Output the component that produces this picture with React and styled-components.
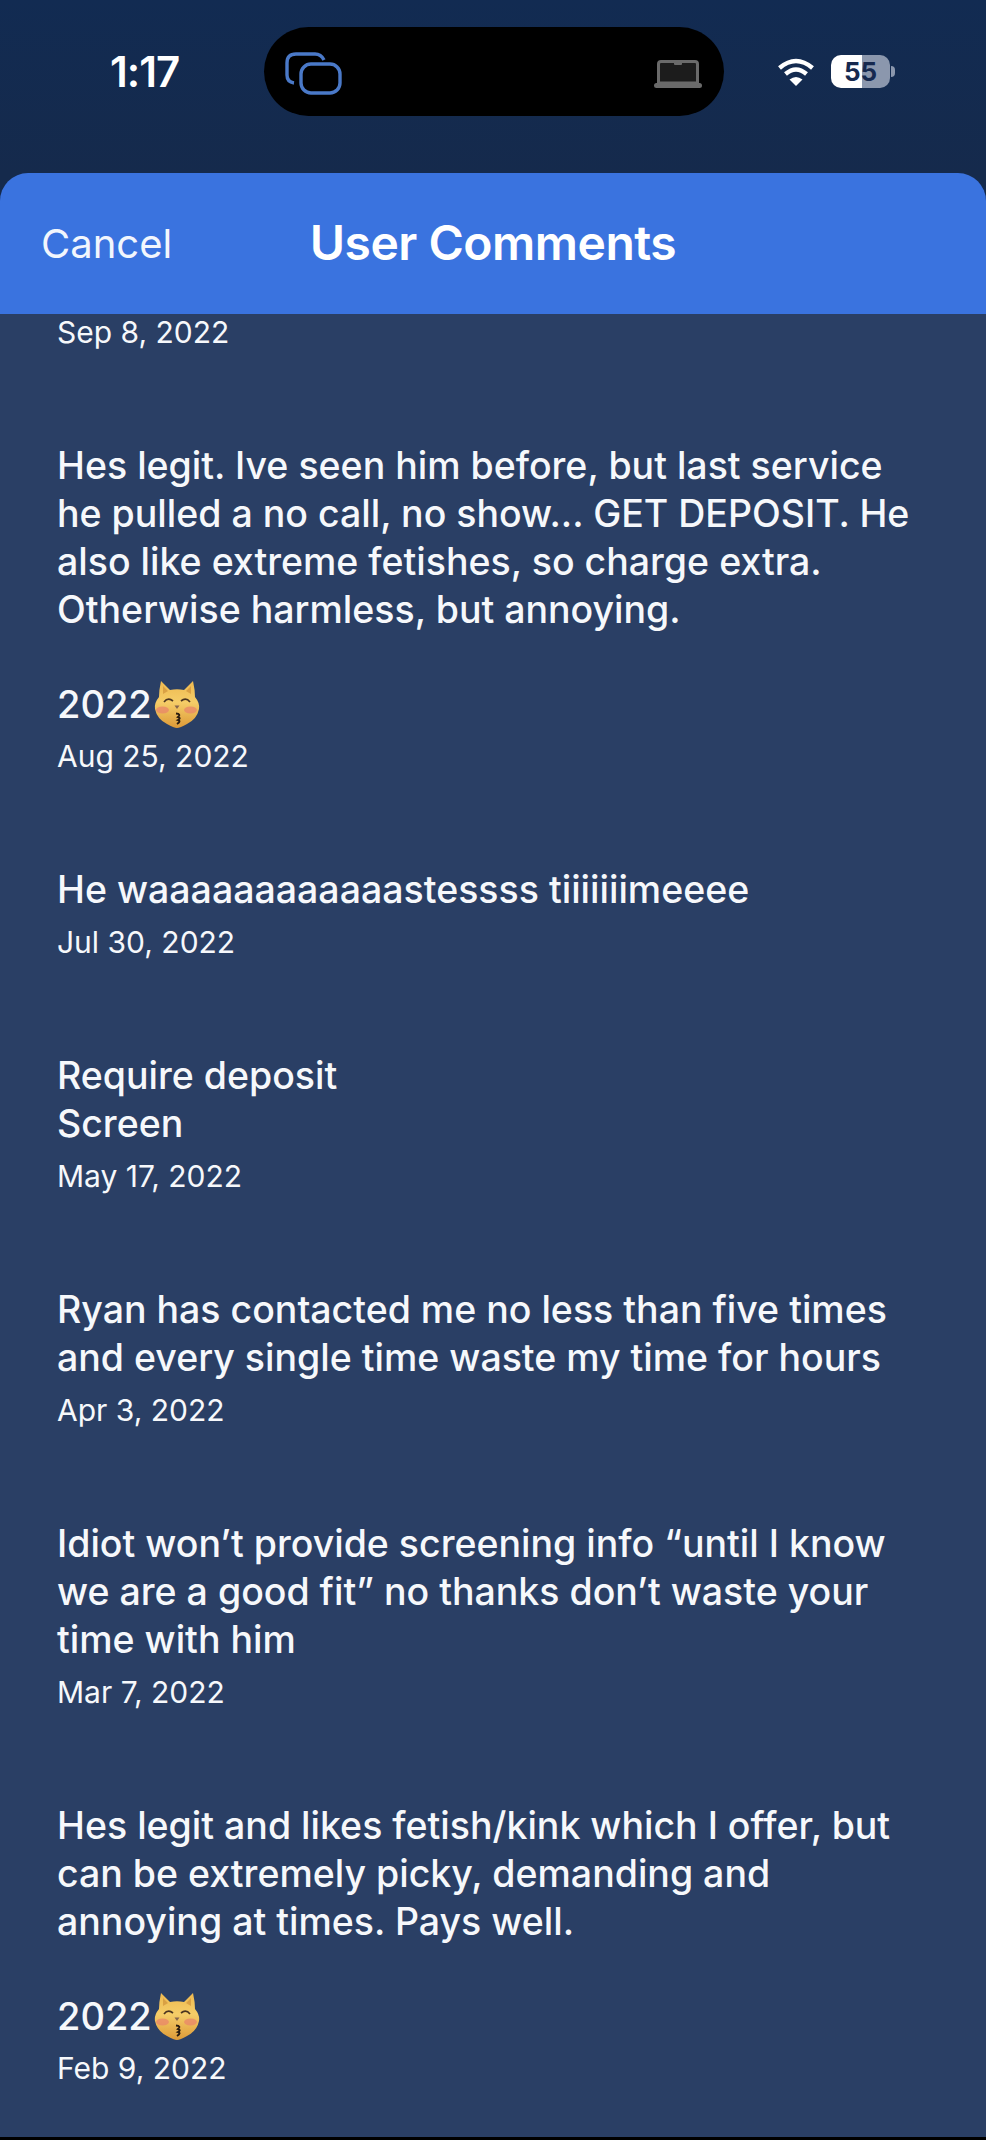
import styled, { createGlobalStyle } from 'styled-components';

const comments = [
  {
    text: 'Hes legit. Ive seen him before, but last service\nhe pulled a no call, no show... GET DEPOSIT. He\nalso like extreme fetishes, so charge extra.\nOtherwise harmless, but annoying.',
    signed: true,
    date: 'Aug 25, 2022',
  },
  { text: 'He waaaaaaaaaaaastessss tiiiiiiimeeee', date: 'Jul 30, 2022' },
  { text: 'Require deposit\nScreen', date: 'May 17, 2022' },
  {
    text: 'Ryan has contacted me no less than five times\nand every single time waste my time for hours',
    date: 'Apr 3, 2022',
  },
  {
    text: 'Idiot won’t provide screening info “until I know\nwe are a good fit” no thanks don’t waste your\ntime with him',
    date: 'Mar 7, 2022',
  },
  {
    text: 'Hes legit and likes fetish/kink which I offer, but\ncan be extremely picky, demanding and\nannoying at times. Pays well.',
    signed: true,
    date: 'Feb 9, 2022',
  },
];

const CatIcon = ({ id }) => (
  <svg width="46" height="47" viewBox="0 0 46 47">
    <defs>
      <linearGradient id={id} x1="0" y1="0" x2="0" y2="1">
        <stop offset="0%" stopColor="#eeb94f" />
        <stop offset="45%" stopColor="#f5cd68" />
        <stop offset="100%" stopColor="#dd9a38" />
      </linearGradient>
    </defs>
    <path
      d="M7 0 L16 9 Q23 7.500 30 9 L39 0 Q41 9 41 16 Q46 22 45 28 Q43 38 33 43 Q26 47 23 47 Q20 47 13 43 Q3 38 1 28 Q0 22 5 16 Q5 9 7 0 Z"
      fill={`url(#${id})`}
    />
    <path d="M9 5 L9 13 L14 10 Z M37 5 L37 13 L32 10 Z" fill="#c98a35" opacity="0.6" />
    <ellipse cx="8.500" cy="29" rx="6.500" ry="3.500" fill="#e8866a" opacity="0.75" />
    <ellipse cx="36.500" cy="29" rx="6.500" ry="3.500" fill="#e8866a" opacity="0.75" />
    <path d="M10 21 Q14 16 19 20 M27 20 Q32 16 36 21" stroke="#4a3420" strokeWidth="1.700" fill="none" />
    <path d="M20.500 24.500 H25.500 L23 28 Z" fill="#86654c" />
    <path
      d="M22 32.500 Q27.500 33 24 36 Q27.500 37 24 39 Q27.500 40 23 43"
      stroke="#2a1c10"
      strokeWidth="1.900"
      fill="none"
    />
  </svg>
);

const WindowsIcon = () => (
  <svg width="58" height="44" viewBox="0 0 58 44" fill="none" stroke="#4a79c8" strokeWidth="3.4">
    <path d="M9 31 Q2 30 2 23 V11 Q2 2 11 2 H30 Q36 2 39 8" />
    <rect x="16" y="12" width="39" height="29" rx="10" />
  </svg>
);

const LaptopIcon = () => (
  <svg width="48" height="28" viewBox="0 0 48 28">
    <path d="M7 1.5 H41 Q43.5 1.5 43.5 4 V23 H4.5 V4 Q4.5 1.5 7 1.5 Z" fill="#1c1c1c" stroke="#6a6a6a" strokeWidth="3" />
    <rect x="20" y="2" width="8" height="3" rx="1" fill="#6a6a6a" />
    <rect x="0" y="23" width="48" height="5" rx="2.5" fill="#6a6a6a" />
  </svg>
);

const WifiIcon = () => (
  <svg width="38" height="30" viewBox="0 0 38 30" fill="none" stroke="#fff" strokeWidth="4.4">
    <path d="M2.5 11 Q19 -3 35.500 11" />
    <path d="M8.5 17 Q19 8 29.500 17" />
    <path d="M19 29 L12.500 22.500 Q19 17.500 25.500 22.500 Z" fill="#fff" stroke="none" />
  </svg>
);

const App = () => {
  return (
    <Screen>
      <GlobalStyle />
      <StatusBar>
        <Time>1:17</Time>
        <Island>
          <WindowsIcon />
          <LaptopIcon />
        </Island>
        <StatusIcons>
          <WifiIcon />
          <Battery>
            <BatteryLevel>55</BatteryLevel>
          </Battery>
          <BatteryCap />
        </StatusIcons>
      </StatusBar>
      <Header>
        <Cancel>Cancel</Cancel>
        <Title>User Comments</Title>
      </Header>
      <List>
        <FirstDate>Sep 8, 2022</FirstDate>
        {comments.map(el => (
          <Comment key={el.date}>
            <Text>{el.text}</Text>
            {el.signed && (
              <Signature>
                2022
                <CatIcon id={`cat-${el.date.slice(0, 3)}`} />
              </Signature>
            )}
            <DateLine>{el.date}</DateLine>
          </Comment>
        ))}
      </List>
      <BottomEdge />
    </Screen>
  );
};

export default App;

const GlobalStyle = createGlobalStyle`
  html, body {
    margin: 0;
    padding: 0;
    background: #000;
  }
  * {
    box-sizing: border-box;
  }
`;

const Screen = styled.div`
  display: flex;
  flex-direction: column;
  width: 986px;
  height: 2140px;
  overflow: hidden;
  font-family: Inter, 'Liberation Sans', sans-serif;
  color: #f6f8fb;
  background: linear-gradient(180deg, #122b52 0%, #152a4c 173px);
`;

const StatusBar = styled.div`
  display: flex;
  align-items: flex-start;
  height: 173px;
  padding: 27px 0 0 110px;
`;

const Time = styled.div`
  width: 71px;
  margin: 20px 83px 0 0;
  font-size: 42px;
  font-weight: 600;
  line-height: 50px;
  letter-spacing: -1px;
  white-space: nowrap;
  color: #fff;
`;

const Island = styled.div`
  display: flex;
  align-items: center;
  justify-content: space-between;
  width: 460px;
  height: 89px;
  padding: 4px 22px 0 21px;
  border-radius: 45px;
  background: #000;
`;

const StatusIcons = styled.div`
  display: flex;
  align-items: center;
  height: 89px;
  margin-left: 53px;
`;

const Battery = styled.div`
  display: flex;
  align-items: center;
  justify-content: center;
  width: 59px;
  height: 33px;
  margin-left: 16px;
  border-radius: 10px;
  background: linear-gradient(90deg, #fff 0%, #fff 53%, #8b97ad 53%, #8b97ad 100%);
`;

const BatteryLevel = styled.span`
  font-size: 26px;
  font-weight: 700;
  line-height: 33px;
  color: #16294f;
`;

const BatteryCap = styled.div`
  width: 4px;
  height: 11px;
  margin-left: 1px;
  border-radius: 0 4px 4px 0;
  background: #8b97ad;
`;

const Header = styled.div`
  display: grid;
  grid-template-columns: 1fr auto 1fr;
  align-items: center;
  height: 141px;
  flex-shrink: 0;
  padding: 0 41px;
  border-radius: 28px 28px 0 0;
  background: #3a73df;
`;

const Cancel = styled.div`
  font-size: 40px;
  font-weight: 400;
  line-height: 50px;
  color: #f2f6fd;
`;

const Title = styled.h1`
  margin: 0 0 2px;
  font-size: 48px;
  font-weight: 600;
  line-height: 56px;
  letter-spacing: -0.5px;
  color: #fff;
`;

const List = styled.div`
  flex: 1;
  padding: 0 57px;
  background: #2a3f65;
`;

const DateLine = styled.div`
  margin-top: 10px;
  font-size: 30px;
  font-weight: 400;
  line-height: 36px;
`;

const FirstDate = styled(DateLine)`
  margin: 0 0 3px;
`;

const Comment = styled.div`
  margin-top: 92px;
`;

const Text = styled.p`
  margin: 0;
  font-size: 37.5px;
  font-weight: 500;
  line-height: 48px;
  white-space: pre;
`;

const Signature = styled.div`
  display: flex;
  align-items: center;
  gap: 2px;
  margin-top: 46px;
  font-size: 38px;
  font-weight: 500;
  line-height: 48px;
`;

const BottomEdge = styled.div`
  height: 3px;
  flex-shrink: 0;
  background: #000;
`;
